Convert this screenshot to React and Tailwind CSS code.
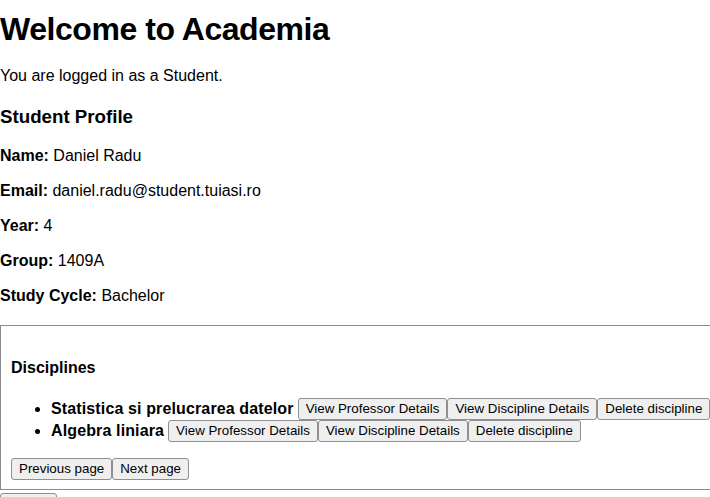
import React from "react";

const profile = [
  ["Name:", "Daniel Radu"],
  ["Email:", "daniel.radu@student.tuiasi.ro"],
  ["Year:", "4"],
  ["Group:", "1409A"],
  ["Study Cycle:", "Bachelor"],
];

const disciplines = ["Statistica si prelucrarea datelor", "Algebra liniara"];

function Btn({ children }) {
  return (
    <button className="h-[22px] px-[7px] border border-[#8f8f8f] rounded-[3px] bg-[#efefef] text-[13.333px] leading-[20px] text-black whitespace-nowrap">
      {children}
    </button>
  );
}

export default function App() {
  return (
    <div className="w-[710px] min-h-[497px] overflow-hidden bg-white text-black font-['Liberation_Sans',Arial,sans-serif]">
      <h1 className="mt-[9px] text-[32px] leading-[40px] font-bold tracking-[-0.45px]">Welcome to Academia</h1>
      <p className="mt-[17px] text-[16px] leading-[20px]">You are logged in as a Student.</p>
      <h3 className="mt-[20px] text-[18.72px] leading-[22px] font-bold">Student Profile</h3>

      {profile.map(([label, value], i) => (
        <p key={i} className={`${i === 0 ? "mt-[18px]" : "mt-[16px]"} text-[16px] leading-[19px]`}>
          <strong className="font-bold">{label}</strong> {value}
        </p>
      ))}

      <div className="mt-[20px] w-[760px] border border-[#8c8c8c] pl-[10px] pt-[32px] pb-[9px]">
        <h4 className="text-[16px] leading-[19px] font-bold">Disciplines</h4>
        <ul className="mt-[21px]">
          {disciplines.map((name) => (
            <li key={name} className="flex items-center h-[22px]">
              <span className="ml-[24px] w-[5px] h-[5px] rounded-full bg-black" />
              <span className="ml-[11px] text-[16px] leading-[22px] font-bold tracking-[0.13px] whitespace-nowrap">{name}</span>
              <div className="ml-[4px] flex">
                <Btn>View Professor Details</Btn>
                <Btn>View Discipline Details</Btn>
                <Btn>Delete discipline</Btn>
              </div>
            </li>
          ))}
        </ul>
        <div className="mt-[16px] flex">
          <Btn>Previous page</Btn>
          <Btn>Next page</Btn>
        </div>
      </div>

      <div className="mt-[1px]">
        <Btn>Logout</Btn>
      </div>
    </div>
  );
}
